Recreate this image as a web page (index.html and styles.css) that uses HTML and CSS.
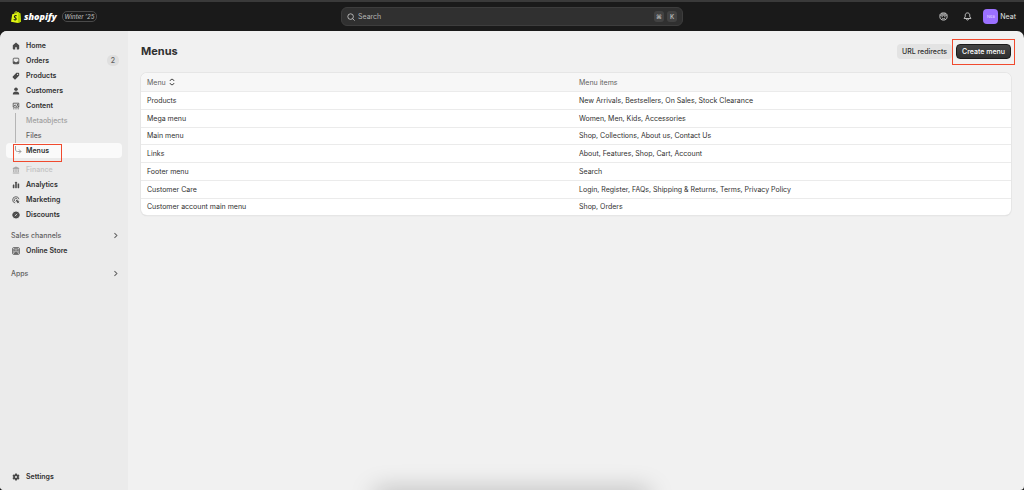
FILE: index.html
```html
<!DOCTYPE html>
<html lang="en">
<head>
    <meta charset="UTF-8">
    <meta name="viewport" content="width=device-width, initial-scale=1.0">
    <title>Menus</title>
    <link rel="stylesheet" href="styles.css">
</head>
<body>
    <header class="topbar">
        <a href="#" class="brand">
            <svg class="logo" viewBox="0 0 20 24" aria-hidden="true">
                <path fill="#e0f512" d="M2.5 6.500 6 5.600C6.800 2.500 8.500.5 10.600.5c1.200 0 1.900.7 2.300 1.900l1.800-.4 2.100 2.100 1.700.3L20 21.500 13.500 24 0 21.400z"/>
                <path fill="#b5d400" d="M14.500 3.500 18.500 4.500 20 21.500 13.500 24z"/>
                <path fill="none" stroke="#1a1a1a" stroke-width="1" d="M7.500 5.800c.5-2 1.700-3.600 3-3.600 1 0 1.200 1.500 1.200 2.600"/>
                <path fill="none" stroke="#1a1a1a" stroke-width="2.200" d="M11.300 9.700c-2.300-1-4.500-.3-4.500 1.600 0 2.200 3.500 2 3.500 4.600 0 2.200-2.600 2.600-4.900.9"/>
            </svg>
            <span class="brand-name">shopify</span>
            <span class="edition">Winter ’25</span>
        </a>
        <label class="search">
            <svg class="icon" viewBox="0 0 20 20" aria-hidden="true"><path class="line" d="M9 2a7 7 0 1 0 0 14A7 7 0 0 0 9 2zM14 14l5 5"/></svg>
            <input type="text" placeholder="Search" aria-label="Search">
            <kbd>⌘</kbd>
            <kbd>K</kbd>
        </label>
        <div class="account">
            <button class="icon-button" aria-label="Sidekick">
                <svg class="icon" viewBox="0 0 20 20" aria-hidden="true">
                    <path class="line" d="M10 2C5 2 2 4 2 8v3c0 4 3 7 8 7s8-3 8-7V8c0-4-3-6-8-6z"/>
                    <path class="line" d="M2 7h16M5 4.500h10M5.500 10.500h3M11.500 10.500h3M6.500 14c2 1.500 5 1.500 7 0"/>
                </svg>
            </button>
            <button class="icon-button" aria-label="Notifications">
                <svg class="icon" viewBox="0 0 20 20" aria-hidden="true"><path class="line" d="M10 2c-3 0-5 2-5 5v3l-2.500 4.500h15L15 10V7c0-3-2-5-5-5zM7.500 15c0 4 5 4 5 0"/></svg>
            </button>
            <button class="user"><span class="avatar">Nea</span>Neat</button>
        </div>
    </header>

    <div class="frame">
        <nav class="sidebar">
            <ul class="nav">
                <li><a href="#"><svg class="icon" viewBox="0 0 20 20"><path d="M10 1 2 8v9c0 1 .7 2 2 2h4v-6h4v6h4c1.300 0 2-1 2-2V8z"/></svg>Home</a></li>
                <li><a href="#"><svg class="icon" viewBox="0 0 20 20"><path class="line" d="M5 3h10c1.500 0 2 .8 2 2v10c0 1.300-.7 2-2 2H5c-1.300 0-2-.7-2-2V5c0-1.200.7-2 2-2z"/><path d="M3 11h4l1.500 2h3l1.500-2h4v6H3z"/></svg>Orders<span class="badge">2</span></a></li>
                <li><a href="#"><svg class="icon" viewBox="0 0 20 20"><path fill-rule="evenodd" d="M11 2h5c1.300 0 2 .8 2 2v5l-9 9c-1 1-2 1-3 0l-4-4c-1-1-1-2 0-3zm3 2.500a1.500 1.500 0 1 0 0 3 1.500 1.500 0 0 0 0-3z"/></svg>Products</a></li>
                <li><a href="#"><svg class="icon" viewBox="0 0 20 20"><circle cx="10" cy="5.500" r="4.500"/><path d="M2 18.500c0-4.500 3-7 8-7s8 2.500 8 7z"/></svg>Customers</a></li>
                <li>
                    <a href="#"><svg class="icon" viewBox="0 0 20 20"><path class="line" d="M3 3h14v10H3zM3 17h3M8.500 17h3M14 17h3M4 11l4-4 3 4 3-2 3 3"/><circle cx="13.500" cy="6.500" r="1.500"/></svg>Content</a>
                    <ul class="subnav">
                        <li><a href="#" class="muted">Metaobjects</a></li>
                        <li><a href="#">Files</a></li>
                        <li class="current"><a href="#" class="active" aria-current="page"><svg class="elbow" viewBox="0 0 8 10" aria-hidden="true"><path d="M.5 0v3c0 1.500.5 2.500 2 2.500H6M4 3.500l2 2-2 2"/></svg>Menus</a><span class="highlight"></span></li>
                    </ul>
                </li>
                <li><a href="#" class="disabled"><svg class="icon" viewBox="0 0 20 20"><path d="M10 1 2 5v3h16V5zM3 9h3v6H3zM8.500 9h3v6h-3zM14 9h3v6h-3zM2 16h16v3H2z"/></svg>Finance</a></li>
                <li><a href="#"><svg class="icon" viewBox="0 0 20 20"><rect x="2" y="9" width="4" height="9" rx="1"/><rect x="8" y="2" width="4" height="16" rx="1"/><rect x="14" y="6" width="4" height="12" rx="1"/></svg>Analytics</a></li>
                <li><a href="#"><svg class="icon" viewBox="0 0 20 20"><path class="line" d="M17.500 8A8 8 0 1 0 8 17.500M13.500 8.500A4 4 0 1 0 8.500 13.500"/><path d="m9 9 10 4-4 2-1.500 4z"/><path class="line" d="m14 14 4 4"/></svg>Marketing</a></li>
                <li><a href="#"><svg class="icon" viewBox="0 0 20 20"><path d="m10 .5 2.500 1.800 3.100-.2 1 2.900 2.900 2.200L18.700 10l.8 2.800-2.900 2.200-1 2.900-3.100-.2L10 19.500l-2.500-1.800-3.100.2-1-2.900L.5 12.800 1.300 10 .5 7.200 3.400 5l1-2.900 3.100.2z"/><path class="cut" d="m7 13 6-6M7 7.500h1M12 12.500h1"/></svg>Discounts</a></li>
            </ul>
            <a href="#" class="section">Sales channels<svg class="chevron" viewBox="0 0 20 20"><path d="m7 3 7 7-7 7"/></svg></a>
            <ul class="nav">
                <li><a href="#"><svg class="icon" viewBox="0 0 20 20"><path class="line" d="M4 1.500h12c1.500 0 2.500 1 2.500 2.500v12c0 1.500-1 2.500-2.500 2.500H4c-1.500 0-2.500-1-2.500-2.500V4c0-1.500 1-2.500 2.500-2.500zM5 8v8h10V8M8.500 16v-4h3v4M4 8h12l-1.500-3.500h-9z"/></svg>Online Store</a></li>
            </ul>
            <a href="#" class="section">Apps<svg class="chevron" viewBox="0 0 20 20"><path d="m7 3 7 7-7 7"/></svg></a>
            <ul class="nav bottom">
                <li><a href="#"><svg class="icon" viewBox="0 0 20 20"><path fill-rule="evenodd" d="M8 1h4l.6 2.700 1.500.9 2.700-.9 2 3.500-2.100 1.900v1.800l2.100 1.900-2 3.500-2.700-.9-1.500.9L12 19H8l-.6-2.700-1.500-.9-2.700.9-2-3.500 2.100-1.900V9.100L1.200 7.200l2-3.500 2.700.9 1.500-.9zm2 6.500a2.500 2.500 0 1 0 0 5 2.500 2.500 0 0 0 0-5z"/></svg>Settings</a></li>
            </ul>
        </nav>

        <main class="content">
            <div class="page-header">
                <h1>Menus</h1>
                <div class="actions">
                    <button class="btn">URL redirects</button>
                    <div class="primary-action">
                        <button class="btn btn-primary">Create menu</button>
                        <span class="highlight"></span>
                    </div>
                </div>
            </div>
            <div class="card">
                <table>
                    <thead>
                        <tr>
                            <th><button class="sort">Menu<svg viewBox="0 0 12 16" aria-hidden="true"><path d="M2 6V5l4-3 4 3v1M2 10v1l4 3 4-3v-1"/></svg></button></th>
                            <th>Menu items</th>
                        </tr>
                    </thead>
                    <tbody>
                        <tr><td>Products</td><td>New Arrivals, Bestsellers, On Sales, Stock Clearance</td></tr>
                        <tr><td>Mega menu</td><td>Women, Men, Kids, Accessories</td></tr>
                        <tr><td>Main menu</td><td>Shop, Collections, About us, Contact Us</td></tr>
                        <tr><td>Links</td><td>About, Features, Shop, Cart, Account</td></tr>
                        <tr><td>Footer menu</td><td>Search</td></tr>
                        <tr><td>Customer Care</td><td>Login, Register, FAQs, Shipping &amp; Returns, Terms, Privacy Policy</td></tr>
                        <tr><td>Customer account main menu</td><td>Shop, Orders</td></tr>
                    </tbody>
                </table>
            </div>
        </main>
        <div class="bottom-shadow"></div>
    </div>
</body>
</html>
```
FILE: styles.css
```css
* {
    box-sizing: border-box;
}

body {
    margin: 0;
    min-height: 100vh;
    display: flex;
    flex-direction: column;
    background-color: #1a1a1a;
    color: #303030;
    font-family: Inter, "Liberation Sans", sans-serif;
    font-size: 7px;
    line-height: 11px;
}

a {
    color: inherit;
    text-decoration: none;
}

button {
    padding: 0;
    border: none;
    background: none;
    color: inherit;
    font: inherit;
    cursor: pointer;
}

ul {
    margin: 0;
    padding: 0;
    list-style: none;
}

.icon {
    width: 8px;
    height: 8px;
    flex: none;
    fill: #4a4a4a;
}

.line {
    fill: none;
    stroke: #4a4a4a;
    stroke-width: 2;
}

.cut {
    fill: none;
    stroke: #ebebeb;
    stroke-width: 2;
}

/* Top bar */
.topbar {
    display: grid;
    grid-template-columns: 1fr 342px 1fr;
    align-items: center;
    height: 31px;
    padding: 0 8px;
    border-top: 2px solid #3a3a3a;
    color: #e3e3e3;
}

.brand {
    display: flex;
    align-items: center;
    padding-left: 3px;
}

.logo {
    width: 10px;
    height: 12px;
}

.brand-name {
    margin-left: 3px;
    color: #fff;
    font-family: "Open Sans", sans-serif;
    font-size: 9px;
    font-style: italic;
    font-weight: 800;
}

.edition {
    margin-left: 5px;
    padding: 0 2px;
    border: 1px solid #4a4a4a;
    border-radius: 5px;
    color: #b5b5b5;
    font-size: 6px;
    font-style: italic;
    font-weight: 500;
    line-height: 9px;
}

.search {
    display: flex;
    align-items: center;
    gap: 3px;
    height: 19px;
    padding: 0 5px;
    border: 1px solid #3d3d3d;
    border-radius: 6px;
    background-color: #303030;
    color: #b5b5b5;
}

.search input {
    flex: 1;
    min-width: 0;
    padding: 0;
    border: none;
    outline: none;
    background: none;
    color: inherit;
    font: inherit;
}

.search input::placeholder {
    color: #b5b5b5;
}

.topbar .line {
    stroke: #d0d0d0;
}

kbd {
    width: 10px;
    border-radius: 3px;
    background-color: #424242;
    font-family: inherit;
    font-size: 6px;
    font-weight: 600;
    text-align: center;
}

.account {
    display: flex;
    align-items: center;
    justify-content: flex-end;
    gap: 12px;
}

.icon-button {
    display: flex;
    width: 12px;
    justify-content: center;
}

.icon-button .icon {
    width: 9px;
    height: 9px;
}

.user {
    display: flex;
    align-items: center;
    gap: 2px;
    margin-left: -2px;
}

.avatar {
    width: 15px;
    border-radius: 4px;
    background-color: #9b70ff;
    color: #e3d6ff;
    font-size: 4px;
    line-height: 15px;
}

/* Page frame */
.frame {
    position: relative;
    flex: 1;
    display: flex;
    overflow: hidden;
    border-radius: 7px 7px 4px 4px;
    background-color: #f1f1f1;
}

.sidebar {
    display: flex;
    flex-direction: column;
    flex: none;
    width: 128px;
    padding: 7px 6px 6px;
    background-color: #ebebeb;
}

.nav a {
    display: flex;
    align-items: center;
    gap: 6px;
    height: 15px;
    padding: 0 3px 0 6px;
    border-radius: 4px;
    font-weight: 600;
}

.badge {
    margin-left: auto;
    padding: 0 4px;
    border-radius: 5px;
    background-color: #dfdfdf;
    color: #616161;
    font-weight: 500;
}

.subnav {
    margin-bottom: 4px;
    background: linear-gradient(#b5b5b5, #b5b5b5) 9px 0 / 1px 36px no-repeat;
}

.nav .subnav a {
    padding-left: 20px;
    color: #616161;
    font-weight: 500;
}

.nav .subnav .muted {
    color: #a0a0a0;
}

.nav .subnav .active {
    gap: 3px;
    padding-left: 9px;
    background-color: #fafafa;
    color: #303030;
    font-weight: 600;
}

.elbow {
    width: 8px;
    height: 10px;
    fill: none;
    stroke: #a0a0a0;
}

.nav .disabled {
    color: #c6c6c6;
}

.disabled .icon {
    fill: #a8a8a8;
}

.section {
    display: flex;
    align-items: center;
    justify-content: space-between;
    height: 15px;
    margin-top: 6px;
    padding: 0 3px 0 5px;
    color: #616161;
    font-weight: 500;
}

.section + .nav {
    margin-bottom: 2px;
}

.chevron {
    width: 7px;
    height: 7px;
    fill: none;
    stroke: #616161;
    stroke-width: 3;
}

.sidebar .bottom {
    margin-top: auto;
    margin-bottom: 0;
}

/* Red marker boxes */
.current,
.primary-action {
    position: relative;
}

.highlight {
    position: absolute;
    inset: -5px -4px -6px;
    border: 1px solid #f04a2e;
    pointer-events: none;
}

.current .highlight {
    inset: 1px auto -4px 7px;
    width: 49px;
}

/* Content */
.content {
    flex: 1;
    padding: 13px 13px 20px;
}

.page-header {
    display: flex;
    align-items: center;
    justify-content: space-between;
    margin-bottom: 14px;
}

h1 {
    margin: 0;
    font-size: 11px;
    font-weight: 700;
    line-height: 15px;
}

.actions {
    display: flex;
    gap: 4px;
}

.btn {
    height: 15px;
    padding: 0 5px;
    border-radius: 4px;
    background-color: #e3e3e3;
    font-weight: 500;
}

.btn-primary {
    display: block;
    border: 1px solid #1a1a1a;
    background: linear-gradient(#454545, #303030);
    color: #fff;
}

.card {
    overflow: hidden;
    border-radius: 6px;
    background-color: #fff;
    box-shadow: 0 0 0 1px #e6e6e6, 0 1px 1px #ccc;
}

table {
    width: 100%;
    height: 142px;
    border-spacing: 0;
    table-layout: fixed;
}

th,
td {
    padding: 0 6px;
    border-bottom: 1px solid #ebebeb;
    text-align: left;
}

th {
    height: 19px;
    background-color: #f7f7f7;
    color: #616161;
    font-weight: 400;
}

th:first-child,
td:first-child {
    width: 432px;
}

tbody tr:last-child td {
    border-bottom: none;
}

.sort {
    display: flex;
    align-items: center;
    gap: 3px;
}

.sort svg {
    width: 6px;
    height: 8px;
    fill: none;
    stroke: #4a4a4a;
    stroke-width: 2;
}

/* Soft shadow along the bottom edge */
.bottom-shadow {
    position: absolute;
    bottom: -10px;
    left: 50%;
    width: 266px;
    height: 10px;
    margin-left: -133px;
    box-shadow: 0 4px 24px 4px rgba(0, 0, 0, 0.25);
}
```
